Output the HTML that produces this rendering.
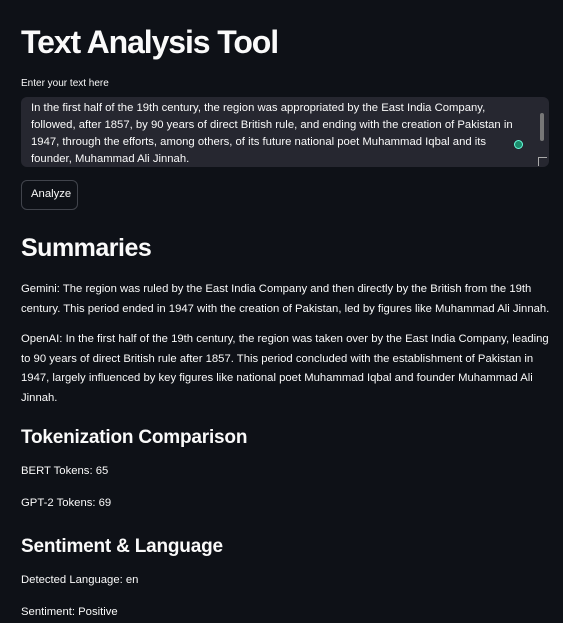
<!DOCTYPE html>
<html><head><meta charset="utf-8"><style>
html,body{margin:0;padding:0;background:#0e1117;width:563px;height:623px;overflow:hidden;}
body{position:relative;font-family:"Liberation Sans",sans-serif;color:#fafafa;}
.a{position:absolute;white-space:nowrap;}
.t{font-size:11.3px;}
</style></head><body>
<div class="a" style="left:21px;top:24px;font-size:32px;font-weight:bold;letter-spacing:-1.1px;">Text Analysis Tool</div>
<div class="a" style="left:21px;top:78px;font-size:10px;">Enter your text here</div>
<div class="a" style="left:21px;top:97px;width:528px;height:70px;background:#262730;border-radius:6px;"></div>
<div class="a" style="left:31px;top:100px;line-height:17px;font-size:11.3px;">In the first half of the 19th century, the region was appropriated by the East India Company,<br>followed, after 1857, by 90 years of direct British rule, and ending with the creation of Pakistan in<br>1947, through the efforts, among others, of its future national poet Muhammad Iqbal and its<br>founder, Muhammad Ali Jinnah.</div>
<div class="a" style="left:540px;top:113px;width:4px;height:28px;background:#777;border-radius:2px;"></div>
<div class="a" style="left:514px;top:140px;width:7px;height:7px;border-radius:50%;background:#1c8c6c;border:1px solid #6fd;"></div>
<div class="a" style="left:538px;top:157px;width:8px;height:8px;border-left:1px solid #aaa;border-top:1px solid #aaa;"></div>
<div class="a" style="left:21px;top:180px;width:55px;height:28px;border:1px solid #41444c;border-radius:6px;"></div>
<div class="a t" style="left:31px;top:188px;">Analyze</div>
<div class="a" style="left:21px;top:234px;font-size:25px;font-weight:bold;letter-spacing:-0.5px;">Summaries</div>
<div class="a t" style="left:21px;top:279px;line-height:20px;">Gemini: The region was ruled by the East India Company and then directly by the British from the 19th<br>century. This period ended in 1947 with the creation of Pakistan, led by figures like Muhammad Ali Jinnah.</div>
<div class="a t" style="left:21px;top:330px;line-height:19.5px;">OpenAI: In the first half of the 19th century, the region was taken over by the East India Company, leading<br>to 90 years of direct British rule after 1857. This period concluded with the establishment of Pakistan in<br>1947, largely influenced by key figures like national poet Muhammad Iqbal and founder Muhammad Ali<br>Jinnah.</div>
<div class="a" style="left:21px;top:427px;font-size:19px;font-weight:bold;letter-spacing:-0.2px;">Tokenization Comparison</div>
<div class="a t" style="left:21px;top:465px;">BERT Tokens: 65</div>
<div class="a t" style="left:21px;top:497px;">GPT-2 Tokens: 69</div>
<div class="a" style="left:21px;top:536px;font-size:19px;font-weight:bold;letter-spacing:-0.2px;">Sentiment &amp; Language</div>
<div class="a t" style="left:21px;top:574px;">Detected Language: en</div>
<div class="a t" style="left:21px;top:606px;">Sentiment: Positive</div>
</body></html>
